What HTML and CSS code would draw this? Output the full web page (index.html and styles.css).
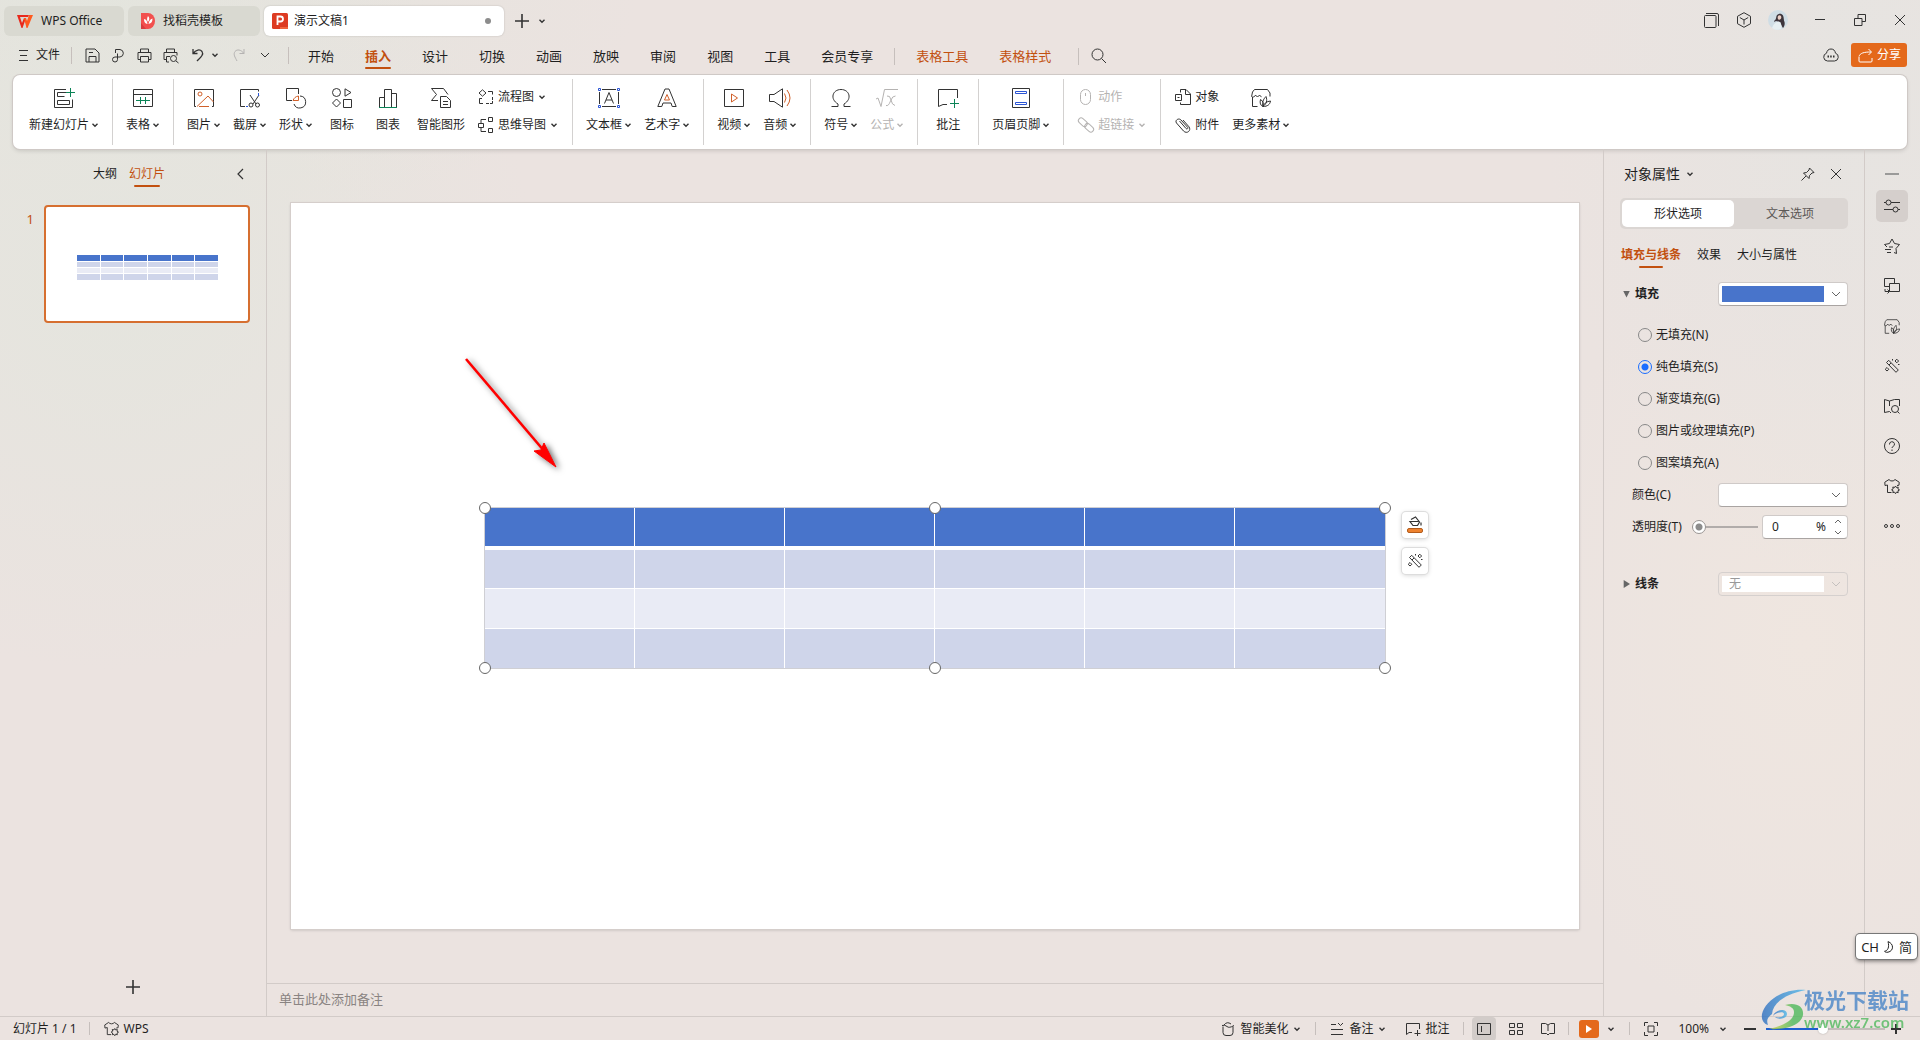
FILE: index.html
```html
<!DOCTYPE html>
<html lang="zh-CN">
<head>
<meta charset="utf-8">
<title>演示文稿1 - WPS Office</title>
<link rel="stylesheet" href="styles.css">
</head>
<body>
<svg class="sprite" aria-hidden="true">
  <symbol id="chev" viewBox="0 0 8 8"><path d="M1.5 2.7 4 5.2 6.500 2.700" stroke-width="1.400"/></symbol>
  <symbol id="chev-lg" viewBox="0 0 10 10"><path d="M1 3l4 4 4-4"/></symbol>
  <symbol id="plus" viewBox="0 0 14 14"><path d="M7 0v14M0 7h14" stroke-width="1.600"/></symbol>
  <symbol id="close" viewBox="0 0 12 12"><path d="M1 1l10 10M11 1 1 11"/></symbol>
  <symbol id="wand" viewBox="0 0 16 16"><path d="M2.500 4.500 4.700 2.300 14.300 12 12 14.300zM5 7l2-2M12.800 1.200l1.800 1.800-1.800 1.800L11 3zM3 9.500l1.800 1.800L3 13l-1.800-1.700zM8.500 1v1.500M14 6.500h1.500"/></symbol>
  <symbol id="shirt" viewBox="0 0 16 16"><path d="M7.500 14.500h-4V7L1 7.500.8 4.200 5 1.500c1 2 5 2 6 0l4.200 2.700-.2 3-2 .3M11.500 8l.9 1.500 1.800-.4-.3 1.800 1.600 1-1.600.9.3 1.900-1.800-.5-.9 1.500-.9-1.500-1.800.4.400-1.800-1.600-1 1.600-.9-.4-1.900 1.800.5z"/></symbol>
  <symbol id="material" viewBox="0 0 20 18"><path d="M6.500 17.500h-5V8L.6 7.500 1.500 3l2-2.500h13l2.500 3.500v3.500M1.500 8C3 8 4 7.500 4.500 6c1 2 3 2 4 0 .5 1 1 1.500 2 1.700M12 17.500c-2.500-1-3.500-3.500-2.500-7 2.500 1.500 3.500 4 2.500 7zc-1-4 0-7 3-10 1.500 4 .5 7.500-3 10zc1.500-3.500 3.500-5 7.500-5.500-.5 3.500-3 5.500-7.500 5.500z"/></symbol>
</svg>

<header class="titlebar">
  <nav class="doc-tabs" aria-label="文档">
    <button class="doc-tab home"><svg width="16" height="13" viewBox="0 0 16 13"><path fill="#e8291c" d="M0 0h12l-1 2H3l2 6 2-5h2L5.500 13h-1z"/><path fill="#ff5a1f" d="M16 0h-4l-2 6-1-3H7l2.500 10h1z"/></svg>WPS Office</button>
    <button class="doc-tab store"><svg width="14" height="16" viewBox="0 0 14 16"><path fill="#f2504e" d="M0 0h7a7 8 0 0 1 0 16H0z"/><path fill="#d83c3f" d="M0 10v6h5z"/><path fill="#fff" d="M7 3c2 2 1.500 4 0 6C5.500 7 6 5 7 3zM3 6c2.500.5 3 2 3.500 5C4 10.500 3 9 3 6zM11.500 5.500c0 3-1 5-4 5.500.5-3 1.500-4.500 4-5.500z"/></svg>找稻壳模板</button>
    <button class="doc-tab current"><svg width="16" height="16" viewBox="0 0 16 16"><rect width="16" height="16" rx="1.500" fill="#dd3b22"/><path d="M8 14h8v2H8z" fill="#f0643c"/><path d="M5.500 12V3.500h3a2.500 2.500 0 0 1 0 5h-3" fill="none" stroke="#fff" stroke-width="1.800"/></svg>演示文稿1<i class="dot"></i></button>
    <button class="plain" aria-label="新建标签"><svg class="ic" width="14" height="14"><use href="#plus"/></svg></button>
    <button class="plain" aria-label="标签列表"><svg class="ic" width="8" height="8"><use href="#chev"/></svg></button>
  </nav>
  <div class="window-tools">
    <button class="plain" aria-label="窗口"><svg class="ic" width="15" height="15" viewBox="0 0 15 15"><rect x=".5" y="2.500" width="11.500" height="12" rx="1"/><path d="M2 .5h11a1.500 1.500 0 0 1 1.500 1.500v11"/></svg></button>
    <button class="plain" aria-label="应用"><svg class="ic" width="14" height="16" viewBox="0 0 14 16"><path d="M7 .7l6.500 3.600v7.400L7 15.300.5 11.700V4.300zM2.800 5.500 7 8l4.200-2.500M7 8v4.500"/></svg></button>
    <button class="plain" aria-label="账户"><svg width="20" height="20" viewBox="0 0 20 20"><circle cx="10" cy="10" r="10" fill="#cfdde5"/><path fill="#3d353c" d="M8.500 6c.5-2.500 5-3.500 6.500-.5 1 2 .5 4.500 1.500 6.500.5 2 0 4-1.500 6-1.500-2-2-4-2.500-5.500L8 11c-1.500 1-2.500 1-1.500-.5C8 9.500 8 8 8.500 6z"/><path fill="#ecd0c6" d="M10 6c1.500-1.500 3.500-.5 3.300 1.500-.2 1.700-1.500 2.700-2.800 2-1-.5-1-2.300-.5-3.500z"/><path fill="#e6eff2" d="M4 18c1-3 3-6 7-6.500 2 1 2.500 4 2.500 7.500-3 1.500-7 1-9.500-1z"/></svg></button>
    <button class="plain" aria-label="最小化"><svg class="ic" width="12" height="12" viewBox="0 0 12 12"><path d="M1 5.500h10"/></svg></button>
    <button class="plain" aria-label="还原"><svg class="ic" width="12" height="12" viewBox="0 0 12 12"><path d="M.5 4.500h7.500v7H.5zM4 4.500v-4h7.500v7H8"/></svg></button>
    <button class="plain" aria-label="关闭"><svg class="ic" width="12" height="12"><use href="#close"/></svg></button>
  </div>
</header>

<div class="menubar">
  <div class="quick">
    <button class="plain file"><svg class="ic" width="9" height="12" viewBox="0 0 9 12"><path d="M0 1.500h9M1 6.500h7M0 11.500h9"/></svg>文件</button>
    <i class="vline"></i>
    <button class="plain" aria-label="保存"><svg class="ic" width="15" height="15" viewBox="0 0 15 15"><path d="M1 1h9l4 4v9H1zM4 14V8.500h7V14M4 4.500h4"/></svg></button>
    <button class="plain" aria-label="输出PDF"><svg class="ic" width="15" height="15" viewBox="0 0 15 15"><path d="M4.500 5V1.500H9a4 3.800 0 0 1 0 7.500H4a2.500 2.500 0 1 0 2.500 2.500V5.500"/></svg></button>
    <button class="plain" aria-label="打印"><svg class="ic" width="15" height="15" viewBox="0 0 15 15"><path d="M3.500 4V1h8v3M3.500 11.500H1v-7h13v7h-2.500M3.500 8.500h8V14h-8z"/></svg></button>
    <button class="plain" aria-label="打印预览"><svg class="ic" width="16" height="15" viewBox="0 0 16 15"><path d="M3.500 4V1h8v3M3.500 11.500H1v-7h13v3M6 14H3.500V8.500H7M13 13l2.500 2"/><circle cx="10.500" cy="10.500" r="3"/></svg></button>
    <button class="plain undo" aria-label="撤销"><svg class="ic" width="12" height="14" viewBox="0 0 12 14"><path d="M1 1v4.500h4.500M1 5.500C4 1.500 8 1 10 3.500c2 3-1 5.500-5 9.500" stroke-width="1.300"/></svg></button>
    <button class="plain undo-list" aria-label="撤销列表"><svg class="ic" width="8" height="8"><use href="#chev"/></svg></button>
    <button class="plain off redo" aria-label="恢复" disabled><svg class="ic" width="12" height="14" viewBox="0 0 12 14"><path d="M11 1v4.500H6.500M11 5.500C8 1.500 4 1 2 3.500c-2 3 0 5.500 2 9.500"/></svg></button>
    <button class="plain more" aria-label="更多"><svg class="ic" width="10" height="10"><use href="#chev-lg"/></svg></button>
    <i class="vline"></i>
  </div>
  <nav class="menus" aria-label="功能区">
    <button>开始</button><button class="current">插入</button><button>设计</button><button>切换</button><button>动画</button><button>放映</button><button>审阅</button><button>视图</button><button>工具</button><button>会员专享</button>
    <i class="vline"></i>
    <button class="context">表格工具</button><button class="context">表格样式</button>
    <i class="vline"></i>
    <button aria-label="搜索"><svg class="ic" width="16" height="16" viewBox="0 0 16 16"><circle cx="6.500" cy="6.500" r="5.500"/><path d="M10.500 10.500 15 15"/></svg></button>
  </nav>
  <div class="share-area">
    <button class="plain" aria-label="云同步"><svg class="ic" width="16" height="14" viewBox="0 0 16 14"><path d="M4.500 13h7a4 4 0 0 0 1-7.800C12 2.500 10.500 1 8 1S4 2.500 3.500 5.200A4 4 0 0 0 4.500 13z"/><path d="M4.500 8.500h1.500M7.200 8.500h1.500M10 8.500h1.500" stroke-width="1.800"/></svg></button>
    <button class="share"><svg class="ic" width="15" height="15" viewBox="0 0 15 15"><path d="M1 9v4q0 1 1 1h11q1 0 1-1v-3M1 8.500C2 5 6 4 13 4M10.500 1 13.500 4l-3 3"/></svg>分享</button>
  </div>
</div>

<section class="ribbon" aria-label="插入">
  <div class="group">
    <button class="big"><svg class="ic" width="22" height="20" viewBox="0 0 22 20"><path d="M13 1.500H1.500v18h18v-8M13 4.500H4.500v4h7M4.500 12.500h12v4h-12z"/><path class="g" d="M17.500 0v9M13 4.500h9"/></svg><span>新建幻灯片<svg class="ic" width="8" height="8"><use href="#chev"/></svg></span></button>
  </div>
  <div class="group">
    <button class="big"><svg class="ic" width="20" height="20" viewBox="0 0 20 20"><path d="M.5 1.500h19v17H.5zM.5 6.500h19"/><path class="g" d="M3 12.500h14M7.500 9v7M12.500 9v7"/></svg><span>表格<svg class="ic" width="8" height="8"><use href="#chev"/></svg></span></button>
  </div>
  <div class="group">
    <button class="big"><svg class="ic" width="20" height="20" viewBox="0 0 20 20"><path d="M2 18.500H.5v-17h19v17H18"/><path class="o" d="M3 18.500 14 8l5.500 6M5 18.500h10"/><circle class="o" cx="6" cy="6" r="2"/></svg><span>图片<svg class="ic" width="8" height="8"><use href="#chev"/></svg></span></button>
    <button class="big"><svg class="ic" width="20" height="20" viewBox="0 0 20 20"><path d="M5 18.500H.5v-17h18v2M10 7l6 9M19 7l-6 9"/><circle cx="11" cy="17" r="2"/><circle cx="17.500" cy="17" r="2"/><path class="b" d="M18.500 5v3M6 18.500h2"/></svg><span>截屏<svg class="ic" width="8" height="8"><use href="#chev"/></svg></span></button>
    <button class="big"><svg class="ic" width="20" height="20" viewBox="0 0 20 20"><path d="M6 12.500H.5V.5h12V6M14 8a6 6 0 1 1-6 8"/><path class="o" d="M12.500 8v4.500H7C8 10 9.500 8.500 12.500 8z"/></svg><span>形状<svg class="ic" width="8" height="8"><use href="#chev"/></svg></span></button>
    <button class="big"><svg class="ic" width="20" height="20" viewBox="0 0 20 20"><circle cx="4.500" cy="4.500" r="4"/><path d="M13 .8 19 4.500 13 8.200zM4.500 11l4 4-4 4-4-4zM11.500 11.500h8v8h-8z"/></svg><span>图标</span></button>
    <button class="big"><svg class="ic" width="20" height="20" viewBox="0 0 20 20"><path d="M1.500 19V9.500h5M6.500 19V1.500h7V19M13.500 5.500h5V19"/><path class="g" d="M1 19.500h18"/></svg><span>图表</span></button>
    <button class="big"><svg class="ic" width="20" height="20" viewBox="0 0 20 20"><path d="M7 12.500H.5l5-6-5-6h12l4.500 6M9.500 8.500h6l4 4v7h-10zM12 13.500h5M12 16.500h5"/></svg><span>智能图形</span></button>
    <div class="stack">
      <button class="small"><svg class="ic" width="16" height="16" viewBox="0 0 16 16"><path d="M4.500.8 8 4 4.500 7.200 1 4zM10 2.500h4.500v3M14.500 8v3M4 9.500H1.500v5H5M8 14.500h3M14.500 12v2.500H12M10 2.500"/></svg>流程图<svg class="ic" width="8" height="8"><use href="#chev"/></svg></button>
      <button class="small"><svg class="ic" width="16" height="16" viewBox="0 0 16 16"><path d="M.5 6.500h5v4h-5zM10.500.5h4v4h-4zM10.500 11.500h4v4h-4zM3 6V2.500h5M3 11v3.500h5"/></svg>思维导图<svg class="ic" width="8" height="8"><use href="#chev"/></svg></button>
    </div>
  </div>
  <div class="group">
    <button class="big"><svg class="ic" width="22" height="20" viewBox="0 0 22 20"><path d="M4 1.500h14M4 18.500h14M1.500 4v12M20.500 4v12M6.500 15.500 11 4.500l4.500 11M8 12h6"/><path class="b" d="M.5.500h2v2h-2zM19.500.500h2v2h-2zM.5 17.500h2v2h-2zM19.500 17.500h2v2h-2z"/></svg><span>文本框<svg class="ic" width="8" height="8"><use href="#chev"/></svg></span></button>
    <button class="big"><svg class="ic" width="20" height="20" viewBox="0 0 20 20"><path d="M.8 18.500 8 1h4l7.200 17.500h-4L14 15H6l-1.200 3.500z"/><path class="o" d="M10 6.500 12.500 12h-5z"/></svg><span>艺术字<svg class="ic" width="8" height="8"><use href="#chev"/></svg></span></button>
  </div>
  <div class="group">
    <button class="big"><svg class="ic" width="20" height="20" viewBox="0 0 20 20"><path d="M.5 1.500h19v17H.5z"/><path class="o" d="M7.500 6v8l6-4z"/></svg><span>视频<svg class="ic" width="8" height="8"><use href="#chev"/></svg></span></button>
    <button class="big"><svg class="ic" width="22" height="20" viewBox="0 0 22 20"><path d="M.5 6.500H5L13.500.800v18.400L5 13.500H.500z"/><path class="o" d="M15.500 5.500q3 4.500 0 9M18 2q6 8 0 16"/></svg><span>音频<svg class="ic" width="8" height="8"><use href="#chev"/></svg></span></button>
  </div>
  <div class="group">
    <button class="big"><svg class="ic" width="20" height="20" viewBox="0 0 20 20"><path d="M.5 18.500H7V16C-1.500 11 1.500 1.500 10 1.500S21.500 11 13 16v2.500h6.500"/></svg><span>符号<svg class="ic" width="8" height="8"><use href="#chev"/></svg></span></button>
    <button class="big" disabled><svg class="ic" width="22" height="20" viewBox="0 0 22 20"><path d="M0 11l2-1 3 8.500L8.500 1.500H22M11 8q3-1 4 4t4 5.500M19.500 8q-3-.5-5 5t-4.500 4.500"/></svg><span>公式<svg class="ic" width="8" height="8"><use href="#chev"/></svg></span></button>
  </div>
  <div class="group">
    <button class="big"><svg class="ic" width="20" height="20" viewBox="0 0 20 20"><path d="M9 16.500H5L.5 18.500v-17h19V10"/><path class="g" d="M16.500 11v9M12 15.500h9"/></svg><span>批注</span></button>
  </div>
  <div class="group">
    <button class="big"><svg class="ic" width="20" height="20" viewBox="0 0 20 20"><path d="M1.500.5h17v19h-17z"/><path class="b" d="M4.500 3.500h11v2h-11zM4.500 14.500h11v2h-11z"/></svg><span>页眉页脚<svg class="ic" width="8" height="8"><use href="#chev"/></svg></span></button>
  </div>
  <div class="group">
    <div class="stack">
      <button class="small" disabled><svg class="ic" width="16" height="16" viewBox="0 0 16 16"><rect x="2.500" y=".5" width="10" height="15" rx="5"/><path d="M7.500 4v3"/></svg>动作</button>
      <button class="small" disabled><svg class="ic" width="16" height="16" viewBox="0 0 16 16"><rect x="0" y="2.500" width="10" height="5.500" rx="2.700" transform="rotate(42 5 5)"/><rect x="6" y="8" width="10" height="5.500" rx="2.700" transform="rotate(42 11 11)"/></svg>超链接<svg class="ic" width="8" height="8"><use href="#chev"/></svg></button>
    </div>
  </div>
  <div class="group last">
    <div class="stack">
      <button class="small"><svg class="ic" width="16" height="16" viewBox="0 0 16 16"><path d="M5.500 3.500v-3H11l4.500 4.500v10.500h-10v-2M10.500.5V5.500h5M.5 5.500h6v6h-6zM2.500 8.500h2"/></svg>对象</button>
      <button class="small"><svg class="ic" width="16" height="16" viewBox="0 0 16 16"><path d="M4.500 4 11 11.500c1 1.200 2.500-.2 1.500-1.300L6 3C3.500.5-.5 3.500 1.500 6l7 8c3.500 3.500 8-.5 5.500-4.200L8 3"/></svg>附件</button>
    </div>
    <button class="big"><svg class="ic" width="20" height="20"><use href="#material"/></svg><span>更多素材<svg class="ic" width="8" height="8"><use href="#chev"/></svg></span></button>
  </div>
</section>

<main class="workspace">
  <aside class="slides">
    <div class="slides-head">
      <button>大纲</button><button class="current">幻灯片</button>
      <button class="collapse" aria-label="收起"><svg class="ic" width="8" height="12" viewBox="0 0 8 12"><path d="M7 1 2 6l5 5" stroke-width="1.200"/></svg></button>
    </div>
    <ol class="thumbs">
      <li><span class="num">1</span>
        <div class="thumb"><svg width="141" height="25" viewBox="0 0 141 25" shape-rendering="crispEdges"><path fill="#4874cb" d="M0 0h141v6H0z"/><path fill="#cfd5ea" d="M0 7h141v5H0zM0 19h141v6H0z"/><path fill="#e9ebf5" d="M0 13h141v5H0z"/><path stroke="#fff" d="M23.500 0v25M46.500 0v25M70.500 0v25M94.500 0v25M117.500 0v25"/></svg></div></li>
    </ol>
    <button class="add" aria-label="新建幻灯片"><svg class="ic" width="14" height="14"><use href="#plus"/></svg></button>
  </aside>

  <section class="editor">
    <div class="canvas">
      <div class="slide">
        <svg class="arrow" width="110" height="125" viewBox="0 0 110 125"><path d="M5 4 84 97" stroke="#f00" stroke-width="2.600"/><path d="M95 112 73 96l7-1 3-7z" fill="#f00" stroke="#f00"/></svg>
        <div class="object">
          <table aria-label="表格">
            <thead><tr><th></th><th></th><th></th><th></th><th></th><th></th></tr></thead>
            <tbody>
              <tr><td></td><td></td><td></td><td></td><td></td><td></td></tr>
              <tr><td></td><td></td><td></td><td></td><td></td><td></td></tr>
              <tr><td></td><td></td><td></td><td></td><td></td><td></td></tr>
            </tbody>
          </table>
          <i class="handle n w"></i><i class="handle n c"></i><i class="handle n e"></i>
          <i class="handle s w"></i><i class="handle s c"></i><i class="handle s e"></i>
          <div class="floaters">
            <button aria-label="填充"><svg class="ic" width="16" height="18" viewBox="0 0 16 18"><path d="M4 3.500 8.500 1l4 5-2 3.500H6L3 5.500h8.500M14 6.500v3" stroke-width="1.200"/><rect x=".5" y="12.500" width="15" height="4" rx="1.500" fill="#ee822f" stroke="#b35c1c"/></svg></button>
            <button aria-label="美化"><svg class="ic" width="16" height="16"><use href="#wand"/></svg></button>
          </div>
        </div>
      </div>
    </div>
    <div class="notes">单击此处添加备注</div>
  </section>

  <aside class="props">
    <div class="props-head">
      <button class="plain title">对象属性<svg class="ic" width="8" height="8"><use href="#chev"/></svg></button>
      <button class="plain push" aria-label="固定"><svg class="ic" width="14" height="14" viewBox="0 0 14 14"><path d="M8.500 1 13 5.500l-2 .5-2.500 2.500-.5 3L2.500 6l3-.5L8 3zM5 9l-4.500 4.500"/></svg></button>
      <button class="plain" aria-label="关闭面板"><svg class="ic" width="12" height="12"><use href="#close"/></svg></button>
    </div>
    <div class="segmented"><button class="on">形状选项</button><button>文本选项</button></div>
    <div class="subtabs"><button class="current">填充与线条</button><button>效果</button><button>大小与属性</button></div>
    <div class="field head">
      <label for="fill"><i class="tri down"></i>填充</label>
      <div class="picker"><select id="fill" class="swatch"><option></option></select><svg class="ic" width="10" height="10"><use href="#chev-lg"/></svg></div>
    </div>
    <div class="radios" role="radiogroup" aria-label="填充">
      <label><input type="radio" name="f">无填充(N)</label>
      <label><input type="radio" name="f" checked>纯色填充(S)</label>
      <label><input type="radio" name="f">渐变填充(G)</label>
      <label><input type="radio" name="f">图片或纹理填充(P)</label>
      <label><input type="radio" name="f">图案填充(A)</label>
    </div>
    <div class="field">
      <label for="color">颜色(C)</label>
      <div class="picker"><select id="color"><option></option></select><svg class="ic" width="10" height="10"><use href="#chev-lg"/></svg></div>
    </div>
    <div class="field">
      <label for="alpha">透明度(T)</label>
      <input type="range" id="alpha" class="alpha" value="0">
      <div class="spinner"><input type="text" value="0" aria-label="透明度"><span>%</span>
        <div><button aria-label="增加"><svg class="ic" width="8" height="5" viewBox="0 0 8 5"><path d="M1 4l3-3 3 3"/></svg></button><button aria-label="减少"><svg class="ic" width="8" height="5" viewBox="0 0 8 5"><path d="M1 1l3 3 3-3"/></svg></button></div></div>
    </div>
    <div class="field head line">
      <label for="line"><i class="tri"></i>线条</label>
      <div class="picker off"><select id="line" disabled><option>无</option></select><svg class="ic" width="10" height="10"><use href="#chev-lg"/></svg></div>
    </div>
  </aside>

  <nav class="rail" aria-label="任务窗格">
    <button class="mini" aria-label="收起"><svg class="ic" width="14" height="2" viewBox="0 0 14 2"><path d="M0 1h14" stroke="#888" stroke-width="1.600"/></svg></button>
    <button class="on" aria-label="属性"><svg class="ic" width="16" height="16" viewBox="0 0 16 16"><path d="M0 4.500h2M7 4.500h9M0 11.500h9M14 11.500h2"/><circle cx="4.500" cy="4.500" r="2.500"/><circle cx="11.500" cy="11.500" r="2.500"/></svg></button>
    <button aria-label="动画"><svg class="ic" width="16" height="16" viewBox="0 0 16 16"><path d="M3 9 .5 6.500l5-1L8 1l2.500 4.500 5 1-3.500 4 .5 5-2.500-1M1 11.500h6M3 14.500h4M5 9h4"/></svg></button>
    <button aria-label="切换"><svg class="ic" width="16" height="16" viewBox="0 0 16 16"><path d="M5 8.500H.5v-8h10V5M5.500 5.500h10v8h-10zM1 11v2.500h4M3.500 11.500l2 2-2 2"/></svg></button>
    <button aria-label="素材"><svg class="ic" width="16" height="15"><use href="#material"/></svg></button>
    <button aria-label="美化"><svg class="ic" width="16" height="16"><use href="#wand"/></svg></button>
    <button aria-label="查找"><svg class="ic" width="16" height="16" viewBox="0 0 16 16"><path d="M7 15 5.500 13.500.5 14.500V1.500l5 1.500 5-1.500h5V8M5.500 3v5M13.500 13.500l2 2"/><circle cx="11" cy="11" r="3.500"/></svg></button>
    <button aria-label="帮助"><svg class="ic" width="16" height="16" viewBox="0 0 16 16"><circle cx="8" cy="8" r="7.500"/><path d="M5.500 6.500a2.500 2.500 0 1 1 3.500 2q-1 .5-1 1.500M8 11.500V13"/></svg></button>
    <button aria-label="皮肤"><svg class="ic" width="16" height="16"><use href="#shirt"/></svg></button>
    <button aria-label="更多"><svg class="ic" width="16" height="6" viewBox="0 0 16 6"><circle cx="2" cy="3" r="1.500"/><circle cx="8" cy="3" r="1.500"/><circle cx="14" cy="3" r="1.500"/></svg></button>
  </nav>
</main>

<footer class="status">
  <span>幻灯片 1 / 1</span><i class="vline"></i>
  <button class="plain"><svg class="ic" width="15" height="15"><use href="#shirt"/></svg>WPS</button>
  <div class="status-right">
    <button class="plain"><svg class="ic" width="14" height="14" viewBox="0 0 14 14"><path d="M2 4.500v6q0 3 3 3h4q3 0 3-3v-6M1 3.500q3-1 5 1t7-1M3 3Q6-1 10 2"/></svg>智能美化<svg class="ic" width="8" height="8"><use href="#chev"/></svg></button>
    <i class="vline"></i>
    <button class="plain"><svg class="ic" width="14" height="14" viewBox="0 0 14 14"><path d="M1 2.500h5M1 7.500h12M1 12.500h12M8 1l2.500 2.500L13 1"/></svg>备注<svg class="ic" width="8" height="8"><use href="#chev"/></svg></button>
    <button class="plain comment"><svg class="ic" width="14" height="14" viewBox="0 0 14 14"><path d="M6 10.500H3L.5 12.500V1.500h13V7M11.500 8v6M8.500 11.500h6"/></svg>批注</button>
    <i class="vline"></i>
    <div class="views">
      <button class="on" aria-label="普通视图"><svg class="ic" width="14" height="14" viewBox="0 0 14 14"><path d="M.5 1.500h13v11H.5zM4.500 4v6"/></svg></button>
      <button aria-label="浏览视图"><svg class="ic" width="14" height="14" viewBox="0 0 14 14"><path d="M.5 1.500h5v4h-5zM8.500 1.500h5v4h-5zM.5 8.500h5v4h-5zM8.500 8.500h5v4h-5z"/></svg></button>
      <button aria-label="阅读视图"><svg class="ic" width="14" height="14" viewBox="0 0 14 14"><path d="M7 13 5.500 11.500H.5v-10h4L7 3l2.500-1.500h4v10h-5zM7 3v6"/></svg></button>
    </div>
    <i class="vline"></i>
    <button class="play" aria-label="放映"><svg width="6" height="8" viewBox="0 0 6 8"><path d="M0 0l6 4-6 4z" fill="#fff"/></svg></button>
    <button class="plain" aria-label="放映选项"><svg class="ic" width="8" height="8"><use href="#chev"/></svg></button>
    <i class="vline"></i>
    <button class="plain" aria-label="适应窗口"><svg class="ic" width="14" height="14" viewBox="0 0 14 14"><path d="M4 .5H.5V4M10 .5h3.500V4M4 13.500H.5V10M10 13.500h3.500V10M4 4h6v6H4z"/></svg></button>
    <button class="plain zoom">100%<svg class="ic" width="8" height="8"><use href="#chev"/></svg></button>
    <button class="plain" aria-label="缩小"><svg class="ic" width="12" height="12" viewBox="0 0 12 12"><path d="M0 6h12" stroke-width="2"/></svg></button>
    <input type="range" class="zoomer" value="48" aria-label="缩放">
    <button class="plain" aria-label="放大"><svg class="ic" width="10" height="10" viewBox="0 0 10 10"><path d="M5 0v10M0 5h10" stroke-width="2"/></svg></button>
  </div>
</footer>

<div class="ime">CH<svg width="10" height="12" viewBox="0 0 10 12" fill="none" stroke="#222"><path d="M4 .6c6 2 6 9.400 0 10.600-2 .3-3-.2-3.500-1C4 9.800 5.500 6 4 .600z"/></svg>简</div>
<div class="mark">
  <svg width="46" height="42" viewBox="0 0 46 42"><defs><linearGradient id="ma" x2="1" y2="0"><stop stop-color="#2f6fc0"/><stop offset="1" stop-color="#4fb8ea"/></linearGradient><linearGradient id="mb" x2="1" y2="0"><stop stop-color="#d8d84a"/><stop offset=".7" stop-color="#4fb95c"/></linearGradient></defs><path fill="url(#ma)" d="M45 1C22-1 4 12 1 25c-1 6 2 10 6 11-2-5 0-8 4-11C12 14 24 5 45 1z"/><path fill="url(#ma)" d="M12 27c2-7 14-8 14-2 0 5-9 6-12 3 4 1 9 0 9-3s-8-2-11 2z"/><path fill="url(#mb)" d="M24 16c12-3 19 2 18 10C40 36 26 41 8 40c13-3 25-8 25-17 0-4-4-6-9-7z"/></svg>
  <div><b>极光下载站</b><span>www.xz7.com</span></div>
</div>
</body>
</html>
```
FILE: styles.css
```css
* { box-sizing: border-box; }

body {
  margin: 0;
  height: 100vh;
  display: flex;
  flex-direction: column;
  overflow: hidden;
  position: relative;
  font: 12px/16px "Noto Sans", "Noto Sans CJK SC", sans-serif;
  color: #1f1f1f;
  background:
    radial-gradient(ellipse 420px 400px at 6% 26%, #e4e5de 0, #e4e5de00 100%),
    radial-gradient(ellipse 560px 240px at 4% 0, #e3e4dd 0, #e3e4dd00 100%),
    radial-gradient(ellipse 300px 500px at 96% 8%, #e6e4e1 0, #e6e4e100 100%),
    radial-gradient(ellipse 300px 400px at 94% 62%, #efe6e0 0, #efe6e000 100%),
    #ebe3e0;
}

button, input, select { font: inherit; color: inherit; }
button { margin: 0; padding: 0; border: 0; background: none; white-space: nowrap; }
svg { display: block; flex: none; }
.sprite { position: absolute; width: 0; height: 0; }
.ic { fill: none; stroke: #333; stroke-width: 1; overflow: visible; }
.ic .g { stroke: #0b8457; }
.ic .o { stroke: #d0602a; }
.ic .b { stroke: #2b55d4; }
.plain { display: flex; align-items: center; }
.vline { width: 1px; height: 17px; background: #c6bfbc; flex: none; }

/* Title bar */
.titlebar { display: flex; justify-content: space-between; padding: 6px 14px 0 4px; }
.doc-tabs { display: flex; gap: 4px; }
.doc-tab {
  display: flex; align-items: center; gap: 8px;
  height: 30px; padding: 0 13px; border-radius: 6px;
  background: #d9d9d1;
}
.doc-tab.home { width: 120px; }
.doc-tab.store { width: 132px; }
.doc-tab.current { width: 240px; padding: 0 13px 0 8px; gap: 6px; background: #fff; box-shadow: 0 0 2px #0003; }
.doc-tabs .plain { margin-left: 7px; }
.doc-tabs .plain + .plain { margin-left: 5px; }
.dot { width: 6px; height: 6px; border-radius: 50%; background: #8c8c8c; margin-left: auto; }
.window-tools { display: flex; align-items: center; height: 28px; gap: 28px; }
.window-tools .plain:nth-child(2) { margin-left: -10px; }
.window-tools .plain:nth-child(3) { margin: 0 -2px 0 -11px; }

/* Menu row */
.menubar { display: flex; align-items: center; height: 39px; padding: 0 13px 1px 19px; }
.quick { display: flex; align-items: center; gap: 11px; }
.quick .file { gap: 8px; }
.quick .vline + .plain { margin-left: 2px; }
.quick .undo { margin-left: 2px; }
.quick .undo-list { margin: 0 3px 0 -4px; }
.quick .more { margin-left: 4px; }
.quick .vline:last-child { margin-left: 7px; }
.off .ic, button:disabled .ic { stroke: #b5b3b2; }
button:disabled { color: #b5b3b2; }
.menus { display: flex; align-items: center; gap: 1px; font-size: 13px; padding: 2px 0 0 4px; }
.menus button { padding: 0 15px; height: 26px; position: relative; }
.menus .current { color: #c2500f; font-weight: 700; }
.menus .current::after, .subtabs .current::after, .slides-head .current::after {
  content: ""; position: absolute; bottom: 0; left: 15px; right: 15px;
  height: 2px; border-radius: 1px; background: #c2500f;
}
.menus .context { color: #c2500f; }
.menus .vline { margin: 0 5px; }
.menus .vline:nth-last-of-type(1) { margin: 0 -4px 0 11px; }
.share-area { display: flex; align-items: center; gap: 12px; margin-left: auto; }
.share {
  display: flex; align-items: center; gap: 4px;
  height: 24px; padding: 0 6px 0 7px;
  border-radius: 3px; background: #e4691b; color: #fff;
}
.share .ic { stroke: #fff; }

/* Ribbon */
.ribbon {
  display: flex; height: 74px; margin: 0 13px; padding: 4px 0 0 3px; flex: none;
  background: #fff; border-radius: 7px; box-shadow: 0 0 0 1px #cfc9c6, 0 2px 4px #0002;
}
.group { display: flex; height: 66px; padding: 0 7px; border-right: 1px solid #d3d1d0; }
.group.last { border: 0; }
.big {
  display: flex; flex-direction: column; align-items: center; gap: 9px;
  min-width: 46px; padding: 9px 6px 0;
}
.big > span, .small { display: flex; align-items: center; }
.big span svg { margin-left: 2px; }
.stack { display: flex; flex-direction: column; gap: 12px; padding: 10px 7px 0; }
.small { gap: 4px; height: 16px; }

/* Workspace */
.workspace { flex: 1; min-height: 0; display: grid; grid-template-columns: 267px minmax(0, 1fr) 261px 56px; }
.slides { display: flex; flex-direction: column; border-right: 1px solid #d2cbc8; }
.slides-head { display: flex; gap: 12px; padding: 12px 22px 0 93px; }
.slides-head button { position: relative; height: 26px; }
.slides-head .current { color: #c2500f; }
.slides-head .current::after { left: 5px; right: 5px; }
.slides-head .collapse { margin-left: auto; }
.thumbs { list-style: none; margin: 0; padding: 18px 16px 0 0; }
.thumbs li { display: flex; }
.num { width: 44px; padding: 6px 10px 0 0; text-align: right; color: #c2500f; font-size: 13px; }
.thumb {
  flex: 1; height: 118px; display: flex; align-items: center; justify-content: center;
  border: 2px solid #d66f30; border-radius: 4px; background: #fff; padding-top: 7px;
}
.add { margin: auto auto 22px 126px; }

.editor { display: flex; flex-direction: column; min-width: 0; }
.canvas { flex: 1; display: flex; padding: 54px 24px; }
.slide { flex: 1; position: relative; background: #fff; box-shadow: 0 0 0 1px #d5cecb, 0 1px 3px #0003; }
.arrow { position: absolute; left: 13%; top: 21%; margin-left: 3px; overflow: visible; filter: drop-shadow(3px 2px 3px #0009); }
.object { position: absolute; left: 15%; top: 42%; width: 70%; height: 162px; margin-top: -1px; border: 1px solid #cfcfd4; }
.object table { width: 100%; height: 100%; border-collapse: separate; border-spacing: 0; table-layout: fixed; }
.object th, .object td { padding: 0; border-right: 1px solid #fff; }
.object th:last-child, .object td:last-child { border-right: 0; }
.object th { background: #4874cb; border-bottom: 4px solid #fff; height: 42px; }
.object td { background: #cfd5ea; border-bottom: 1px solid #fff; height: 39px; }
.object tr:last-child td { border-bottom: 0; }
.object tbody tr:nth-child(2) td { background: #e9ebf5; }
.handle { position: absolute; width: 12px; height: 12px; margin: -6px; border: 1px solid #666; border-radius: 50%; background: #fff; }
.n { top: 0; } .s { top: 100%; }
.w { left: 0; } .c { left: 50%; } .e { left: 100%; }
.floaters { position: absolute; left: 100%; top: 4px; margin-left: 17px; display: grid; gap: 10px; }
.floaters button {
  display: grid; place-items: center; width: 26px; height: 26px;
  border-radius: 4px; background: #fff; box-shadow: 0 0 0 1px #ddd, 0 1px 5px #0003;
}
.notes { height: 33px; padding: 7px 12px; border-top: 1px solid #d2cbc8; font-size: 13px; color: #8a8482; }

/* Properties pane */
.props { border-left: 1px solid #d2cbc8; padding: 15px 16px 0; }
.props-head { display: flex; align-items: center; gap: 15px; height: 20px; font-size: 14px; padding: 0 6px 0 4px; }
.title { gap: 6px; }
.push { margin-left: auto; }
.segmented { display: flex; margin-top: 14px; padding: 2px; border-radius: 5px; background: #dbd6d3; }
.segmented button { flex: 1; height: 27px; border-radius: 5px; color: #5c5856; }
.segmented .on { background: #fff; color: #1f1f1f; }
.subtabs { display: flex; gap: 16px; margin: 13px 0 14px 1px; }
.subtabs button { position: relative; height: 26px; }
.subtabs .current { color: #c2500f; font-weight: 700; }
.subtabs .current::after { left: 18px; right: 18px; }
.field { display: flex; align-items: center; height: 24px; margin-bottom: 8px; padding-left: 12px; }
.field label { flex: 1; }
.field.head { padding-left: 3px; margin-bottom: 17px; }
.field.head label { display: flex; align-items: center; gap: 5px; font-weight: 700; }
.field.line { margin-top: 33px; }
.tri { width: 7px; height: 8px; background: #666; clip-path: polygon(10% 0, 100% 50%, 10% 100%); }
.tri.down { height: 7px; clip-path: polygon(0 0, 100% 0, 50% 100%); }
.picker { position: relative; width: 130px; height: 24px; }
.picker select {
  width: 100%; height: 100%; padding: 0 10px; appearance: none;
  border: 1px solid #cfcac8; border-bottom-color: #a9a4a2; border-radius: 4px; background: #fff;
}
.picker .swatch { background: linear-gradient(#4874cb, #4874cb) 3px 3px / 102px 16px no-repeat #fff; }
.picker.off select { background: linear-gradient(#fff, #fff) 3px 3px / 102px 16px no-repeat; border-color: #d5d0ce; color: #999; opacity: 1; }
.picker .ic { position: absolute; right: 7px; top: 7px; stroke: #666; }
.picker.off .ic { stroke: #c5c1bf; }
.radios { display: grid; gap: 16px; padding: 4px 0 12px 18px; }
.radios label { display: flex; align-items: center; gap: 4px; height: 16px; }
.radios input { appearance: none; width: 14px; height: 14px; margin: 0; border: 1px solid #888; border-radius: 50%; }
.radios input:checked { border-color: #1a6dff; background: radial-gradient(#1a6dff 3px, transparent 4px); }
input[type="range"] { appearance: none; background: none; margin: 0; height: 16px; }
.field .alpha { width: 66px; margin-right: 4px; }
.alpha::-webkit-slider-runnable-track { height: 2px; background: #b1acaa; }
.alpha::-webkit-slider-thumb {
  appearance: none; width: 14px; height: 14px; margin-top: -6px;
  border: 1px solid #9a9694; border-radius: 50%; background: radial-gradient(#8c8c8c 3px, #fff 4px);
}
.spinner {
  display: flex; align-items: center; flex: none; width: 86px; height: 24px; padding: 0 5px 0 9px;
  border: 1px solid #cfcac8; border-bottom-color: #a9a4a2; border-radius: 4px; background: #fff;
}
.spinner input { flex: 1; min-width: 0; width: 20px; padding: 0; border: 0; background: none; }
.spinner > div { display: grid; gap: 6px; margin-left: 8px; }
.spinner .ic { stroke: #666; }

/* Right rail */
.rail { display: flex; flex-direction: column; align-items: center; gap: 8px; border-left: 1px solid #d2cbc8; padding: 9px 2px 0 0; }
.rail button { display: grid; place-items: center; width: 32px; height: 32px; border-radius: 5px; }
.rail .mini { height: 32px; margin-bottom: -8px; }
.rail .on { background: #d5cfcc; }

/* Status bar */
.status { display: flex; align-items: center; height: 24px; padding: 0 19px 0 13px; border-top: 1px solid #d2cbc8; flex: none; }
.status .plain { gap: 5px; }
.status > .vline { margin: 0 14px 0 12px; }
.status .vline { height: 13px; }
.status-right { display: flex; align-items: center; margin-left: auto; }
.status-right .vline { margin: 0 14px; }
.status .comment { margin-left: 20px; }
.views { display: flex; gap: 8px; margin: 0 -6px; }
.views button { display: grid; place-items: center; width: 24px; height: 24px; border-radius: 4px; }
.views .on { background: #d2ccc9; }
.play { display: grid; place-items: center; width: 20px; height: 18px; margin: 0 8px 0 -4px; border-radius: 3px; background: #e4691b; }
.status .zoom { gap: 10px; margin: 0 17px 0 20px; }
.status .zoomer { width: 119px; margin: 0 6px 0 10px; }
.zoomer::-webkit-slider-runnable-track { height: 2px; background: linear-gradient(90deg, #1d5fd0 48%, #c4bcba 48%); }
.zoomer::-webkit-slider-thumb { appearance: none; width: 10px; height: 10px; margin-top: -4px; border-radius: 50%; background: #fff; box-shadow: 0 0 2px #0004; }

/* Overlays */
.ime {
  position: absolute; right: 3px; bottom: 81px; display: flex; align-items: center; gap: 5px;
  height: 25px; padding: 0 5px; border-radius: 4px; background: #fff; font-size: 13px;
  box-shadow: 0 0 0 1px #777, 0 2px 4px #0008;
}
.mark { position: absolute; right: 11px; bottom: 8px; display: flex; align-items: center; opacity: .8; pointer-events: none; }
.mark div { display: flex; flex-direction: column; margin-left: -3px; }
.mark b { font-size: 21px; line-height: 24px; color: #4a86c8; }
.mark span { font-size: 15px; line-height: 20px; font-weight: 600; color: #52b95f; }
```
